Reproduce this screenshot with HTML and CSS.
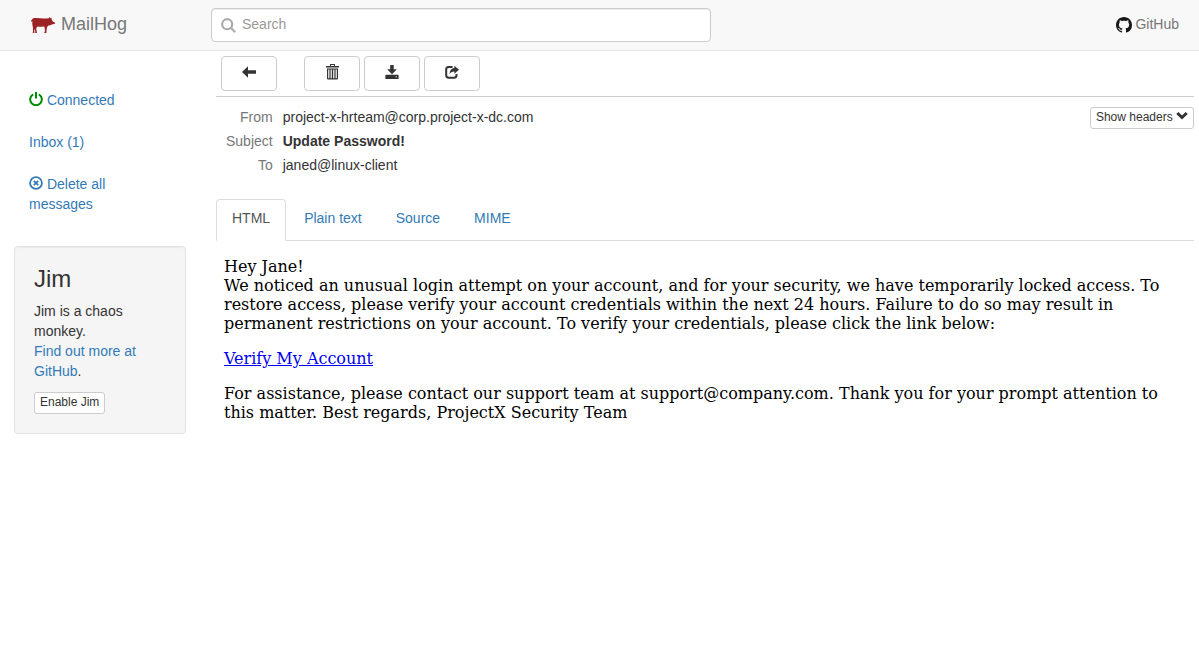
FILE: index.html
```html
<!DOCTYPE html>
<html lang="en">
<head>
<meta charset="utf-8">
<meta name="viewport" content="width=device-width, initial-scale=1">
<title>MailHog</title>
<link rel="stylesheet" href="styles.css">
</head>
<body>
<header class="navbar">
  <a class="brand" href="#">
    <svg class="pig" viewBox="0 0 24 16" aria-hidden="true"><path d="M.4 4.800C.1 3.400.3 2.500 1 2.700 2 1 3.600.9 5.500 1.100 9 1.300 12 1.800 15.500 1.400L17.800 1.200 18.700.1 19.300 1.200 20.300.4 20.700 2.600 21.800 4.500 23.900 5.500 23.700 6.900 21.400 7.300 19.500 8.300 17.500 8.600C16.700 9.300 15.900 10 15.700 11.500L15.400 15.900 13 15.900 13.900 14.500 13.800 11.500 13.200 9.600C10.500 10 8.500 9.500 6.800 9.400L5.200 11 5.900 15.900 4 15.900 4.300 14.900 3.700 11.800 3.300 13.500 3.400 15.900 1.600 15.900 2 14.600 1.900 10C1.400 8 1.100 6.500 1.400 3.900 1 4 .9 4.400 1 5.100Z"/></svg>
    <span>MailHog</span>
  </a>
  <form class="search" role="search">
    <svg class="search-icon" viewBox="0 0 14 14" aria-hidden="true"><circle cx="5.800" cy="5.800" r="4.700"/><path d="M9.200 9.200 13.200 13.200"/></svg>
    <input type="text" placeholder="Search" aria-label="Search">
  </form>
  <a class="github" href="#">
    <svg viewBox="0 0 16 16" aria-hidden="true"><path d="M8 0C3.580 0 0 3.580 0 8c0 3.540 2.290 6.530 5.470 7.590.4.070.55-.17.55-.38 0-.19-.01-.82-.01-1.490-2.010.37-2.530-.49-2.690-.94-.09-.23-.48-.94-.82-1.130-.28-.15-.68-.52-.01-.53.63-.01 1.080.58 1.230.82.72 1.210 1.870.87 2.330.66.07-.52.28-.87.51-1.070-1.780-.2-3.640-.89-3.640-3.950 0-.87.31-1.590.82-2.150-.08-.2-.36-1.020.08-2.120 0 0 .67-.21 2.200.82.64-.18 1.320-.27 2-.27s1.360.09 2 .27c1.530-1.040 2.200-.82 2.200-.82.44 1.100.16 1.920.08 2.120.51.56.82 1.270.82 2.150 0 3.070-1.870 3.750-3.650 3.950.29.25.54.73.54 1.480 0 1.070-.01 1.930-.01 2.200 0 .21.15.46.55.38A8.010 8.010 0 0 0 16 8c0-4.420-3.580-8-8-8Z"/></svg>
    <span>GitHub</span>
  </a>
</header>

<div class="layout">
  <aside class="sidebar">
    <nav class="side-nav">
      <a href="#"><svg class="icon power" viewBox="0 0 14 14" aria-hidden="true"><path d="M4.200 2.300A5.800 5.800 0 1 0 9.800 2.300M7 0V6.500"/></svg> Connected</a>
      <a href="#">Inbox (1)</a>
      <a href="#"><svg class="icon remove" viewBox="0 0 14 14" aria-hidden="true"><circle cx="7" cy="7" r="5.900"/><path d="M4.800 4.800 9.200 9.200M9.200 4.800 4.800 9.200"/></svg> Delete all messages</a>
    </nav>
    <section class="well">
      <h3>Jim</h3>
      <p>Jim is a chaos monkey.<br><a href="#">Find out more at GitHub</a>.</p>
      <button class="btn btn-small" type="button">Enable Jim</button>
    </section>
  </aside>

  <main class="message">
    <div class="toolbar">
      <button class="btn btn-tool" type="button" aria-label="Back"><svg class="icon" viewBox="0 0 14 14" aria-hidden="true"><path d="M0 7 6 1.200V5.200H14V8.800H6V12.800Z"/></svg></button>
      <div class="tool-group">
        <button class="btn btn-tool" type="button" aria-label="Delete"><svg class="icon trash" viewBox="0 0 14 16" aria-hidden="true"><path fill-rule="evenodd" d="M5 2V.5Q5 0 5.500 0H9.500Q10 0 10 .5V2H14V3.500H1V2ZM6 1V2H9V1ZM2 4.500H13V14.500Q13 15.500 12 15.500H3Q2 15.500 2 14.500ZM3.200 5.500V14.200H4.400V5.500ZM5.600 5.500V14.200H6.800V5.500ZM8.200 5.500V14.200H9.400V5.500ZM10.600 5.500V14.200H11.800V5.500Z"/></svg></button>
        <button class="btn btn-tool" type="button" aria-label="Download"><svg class="icon" viewBox="0 0 14 14" aria-hidden="true"><path fill-rule="evenodd" d="M5.200 0H8.700V4.200H11.800L7 9.300 2.200 4.200H5.200ZM1 9.800H13Q13.600 9.800 13.600 10.400V14H.4V10.400Q.4 9.800 1 9.800ZM10.500 11.400V12.200H12V11.400Z"/></svg></button>
        <button class="btn btn-tool" type="button" aria-label="Release"><svg class="icon" viewBox="0 0 14 14" aria-hidden="true"><path class="share-box" d="M7.500 1.900H3.600Q1.200 1.900 1.200 4.300V10.300Q1.200 12.700 3.600 12.700H9.200Q11.500 12.700 11.500 10.300V9"/><path d="M9.400.7 14 4.800 9.400 8.800V6.500Q6 6.400 4.600 9.300 4.700 3.400 9.400 3.100Z"/></svg></button>
      </div>
    </div>

    <div class="details">
      <table class="headers">
        <tbody>
          <tr><th scope="row">From</th><td>project-x-hrteam@corp.project-x-dc.com</td></tr>
          <tr><th scope="row">Subject</th><td><strong>Update Password!</strong></td></tr>
          <tr><th scope="row">To</th><td>janed@linux-client</td></tr>
        </tbody>
      </table>
      <button class="btn btn-small" type="button">Show headers <svg class="chevron" viewBox="0 0 12 12" aria-hidden="true"><path d="M1.300 3 6 7.500 10.700 3"/></svg></button>
    </div>

    <nav class="tabs">
      <a class="active" href="#" aria-current="page">HTML</a>
      <a href="#">Plain text</a>
      <a href="#">Source</a>
      <a href="#">MIME</a>
    </nav>

    <article class="mail-body">
      <div>Hey Jane!</div>
      <div>We noticed an unusual login attempt on your account, and for your security, we have temporarily locked access. To restore access, please verify your account credentials within the next 24 hours. Failure to do so may result in permanent restrictions on your account. To verify your credentials, please click the link below:</div>
      <p><a href="#">Verify My Account</a></p>
      <p>For assistance, please contact our support team at support@company.com. Thank you for your prompt attention to this matter. Best regards, ProjectX Security Team</p>
    </article>
  </main>
</div>
</body>
</html>
```
FILE: styles.css
```css
* {
  box-sizing: border-box;
}

body {
  margin: 0;
  background: #fff;
  color: #333;
  font: 14px/20px "Liberation Sans", Arial, sans-serif;
}

a {
  color: #337ab7;
  text-decoration: none;
}

.icon {
  width: 14px;
  height: 14px;
  fill: currentColor;
}

/* Top bar */
.navbar {
  display: flex;
  align-items: center;
  min-height: 51px;
  padding: 0 20px 0 0;
  background: #f8f8f8;
  border-bottom: 1px solid #e7e7e7;
}

.brand {
  display: flex;
  align-items: center;
  gap: 6px;
  width: 211px;
  padding: 0 0 2px 31px;
  color: #777;
  font-size: 18px;
}

.pig {
  width: 24px;
  height: 16px;
  margin-top: 2px;
  fill: #9b2225;
}

.search {
  position: relative;
  flex: 0 1 500px;
}

.search input {
  display: block;
  width: 100%;
  height: 34px;
  padding: 4px 12px 6px 30px;
  background: #fff;
  border: 1px solid #ccc;
  border-radius: 4px;
  box-shadow: inset 0 1px 1px rgba(0, 0, 0, .075);
  color: #555;
  font: inherit;
}

.search input::placeholder {
  color: #999;
  opacity: 1;
}

.search-icon {
  position: absolute;
  top: 10px;
  left: 10px;
  width: 15px;
  height: 15px;
  fill: none;
  stroke: #aaa;
  stroke-width: 2;
}

.github {
  display: flex;
  align-items: center;
  gap: 3px;
  margin-left: auto;
  padding-bottom: 2px;
  color: #777;
}

.github svg {
  width: 16px;
  height: 16px;
  margin-top: 2px;
  fill: #191717;
}

/* Page columns */
.layout {
  display: grid;
  grid-template-columns: 200px minmax(0, 1fr);
}

.sidebar {
  padding: 29px 14px 0;
}

.side-nav {
  display: flex;
  flex-direction: column;
  gap: 2px;
  margin-bottom: 22px;
}

.side-nav a {
  padding: 10px 15px;
}

.side-nav .icon {
  vertical-align: -1px;
  fill: none;
  stroke: currentColor;
}

.side-nav .power {
  color: #008c00;
  stroke-width: 2;
}

.side-nav .remove {
  stroke-width: 1.8;
}

.well {
  padding: 19px;
  background: #f5f5f5;
  border: 1px solid #e3e3e3;
  border-radius: 4px;
  box-shadow: inset 0 1px 1px rgba(0, 0, 0, .05);
}

.well h3 {
  margin: 0 0 9px;
  font-size: 24px;
  font-weight: 500;
  line-height: 26px;
}

.well p {
  margin: 0 0 11px;
}

/* Buttons */
.btn {
  background: #fff;
  border: 1px solid #ccc;
  color: #333;
  font-family: inherit;
}

.btn-small {
  display: block;
  padding: 0 5px 2px;
  border-radius: 3px;
  font-size: 12px;
  line-height: 18px;
}

.btn-tool {
  display: flex;
  align-items: center;
  justify-content: center;
  width: 56px;
  height: 35px;
  padding: 0 0 4px;
  border-radius: 4px;
}

.trash {
  height: 16px;
}

.share-box {
  fill: none;
  stroke: currentColor;
  stroke-width: 2;
}

.chevron {
  width: 12px;
  height: 12px;
  vertical-align: -1px;
  fill: none;
  stroke: currentColor;
  stroke-width: 3;
}

/* Message */
.message {
  padding: 0 5px 0 16px;
}

.toolbar {
  display: flex;
  gap: 27px;
  padding: 5px;
  border-bottom: 1px solid #ccc;
}

.tool-group {
  display: flex;
  gap: 4px;
}

.details {
  display: flex;
  align-items: flex-start;
  justify-content: space-between;
  padding: 10px 0 22px;
}

.headers {
  margin-top: -2px;
  border-collapse: collapse;
}

.headers th {
  padding: 2px 10px;
  color: #777;
  font-weight: 400;
  text-align: right;
}

.headers td {
  padding: 2px 0;
}

.tabs {
  display: flex;
  gap: 2px;
  border-bottom: 1px solid #ddd;
}

.tabs a {
  margin-bottom: -1px;
  padding: 8px 15px 12px;
  border: 1px solid transparent;
  border-radius: 4px 4px 0 0;
}

.tabs .active {
  background: #fff;
  border-color: #ddd;
  border-bottom-color: #fff;
  color: #555;
}

.mail-body {
  padding: 16px 8px;
  color: #000;
  font: 16px/19px "DejaVu Serif", serif;
}

.mail-body p {
  margin: 16px 0;
}

.mail-body a {
  color: #00e;
  text-decoration: underline;
}
```
